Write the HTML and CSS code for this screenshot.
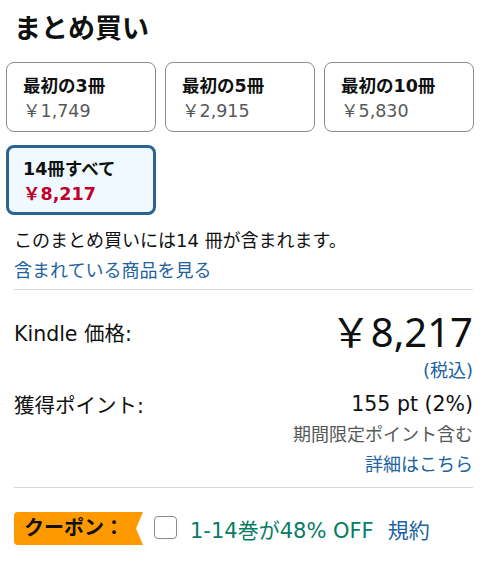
FILE: index.html
```html
<!DOCTYPE html>
<html lang="ja">
<head>
    <meta charset="UTF-8">
    <meta name="viewport" content="width=device-width, initial-scale=1.0">
    <title>まとめ買い</title>
    <link rel="stylesheet" href="styles.css">
</head>
<body>
    <div class="panel">
        <h2 class="title">まとめ買い</h2>

        <div class="swatches">
            <div class="swatch">
                <div class="swatch-name">最初の3冊</div>
                <div class="swatch-price">￥1,749</div>
            </div>
            <div class="swatch">
                <div class="swatch-name">最初の5冊</div>
                <div class="swatch-price">￥2,915</div>
            </div>
            <div class="swatch">
                <div class="swatch-name">最初の10冊</div>
                <div class="swatch-price">￥5,830</div>
            </div>
            <div class="swatch selected">
                <div class="swatch-name">14冊すべて</div>
                <div class="swatch-price">￥8,217</div>
            </div>
        </div>

        <div class="summary">
            <div>このまとめ買いには14 冊が含まれます。</div>
            <a class="link" href="#">含まれている商品を見る</a>
        </div>

        <hr class="divider">

        <div class="price-row">
            <span class="label">Kindle 価格:</span>
            <span class="big-price">￥8,217</span>
        </div>
        <div class="note"><a class="link" href="#">(税込)</a></div>

        <div class="points-row">
            <span class="label">獲得ポイント:</span>
            <span class="points">155 pt (2%)</span>
        </div>
        <div class="note muted">期間限定ポイント含む</div>
        <div class="note"><a class="link" href="#">詳細はこちら</a></div>

        <hr class="divider">

        <div class="coupon">
            <span class="coupon-badge">クーポン：</span>
            <span class="checkbox"></span>
            <span class="coupon-text">1-14巻が48% OFF</span>
            <a class="link coupon-terms" href="#">規約</a>
        </div>
    </div>
</body>
</html>
```

FILE: styles.css
```css
body {
    margin: 0;
    font-family: "DejaVu Sans", "Noto Sans CJK JP", sans-serif;
    color: #0f1111;
    background: #fff;
}
.panel {
    padding: 0 15px 0 14px;
}
.title {
    margin: 0;
    padding-top: 11px;
    font-size: 27px;
    line-height: 36px;
    font-weight: bold;
}
.swatches {
    display: grid;
    grid-template-columns: repeat(3, 150px);
    column-gap: 9px;
    row-gap: 13px;
    margin: 15px 0 0 -8px;
}
.swatch {
    border: 1px solid #888c8c;
    border-radius: 8px;
    padding: 11px 15px 7px 16px;
    line-height: 25px;
    font-size: 17.5px;
}
.swatch-name {
    font-weight: bold;
}
.swatch-price {
    color: #565959;
}
.swatch.selected {
    border: 3px solid #2b6494;
    padding: 9px 13px 5px 14px;
    background: #eff9ff;
}
.swatch.selected .swatch-price {
    color: #c0002a;
    font-weight: bold;
}
.summary {
    margin-top: 11px;
    font-size: 18px;
    line-height: 30px;
}
.link {
    color: #2162a1;
    text-decoration: none;
}
.summary .link {
    display: block;
}
.divider {
    border: 0;
    border-top: 1px solid #d5d9d9;
    margin: 3px 0 0;
}
.price-row {
    display: flex;
    justify-content: space-between;
    align-items: center;
    height: 44px;
    margin-top: 20px;
}
.label {
    font-size: 20.5px;
}
.big-price {
    font-family: "Noto Sans", "Noto Sans CJK JP", sans-serif;
    font-size: 40px;
    line-height: 44px;
}
.note {
    text-align: right;
    font-size: 18px;
    line-height: 30px;
}
.price-row + .note {
    margin-top: 2px;
}
.points-row {
    display: flex;
    justify-content: space-between;
    align-items: center;
    height: 30px;
    margin-top: 3px;
}
.points {
    font-size: 20.5px;
}
.muted {
    color: #565959;
    margin-top: 1px;
}
.note + .divider {
    margin-top: 7px;
}
.coupon {
    display: flex;
    align-items: center;
    margin-top: 24px;
}
.coupon-badge {
    box-sizing: border-box;
    width: 129px;
    height: 33px;
    line-height: 33px;
    padding-left: 10px;
    background: #fe9900;
    border-radius: 4px 0 0 4px;
    font-size: 20px;
    font-weight: bold;
    clip-path: polygon(0 0, 100% 0, calc(100% - 7px) 50%, 100% 100%, 0 100%);
}
.checkbox {
    box-sizing: border-box;
    width: 23px;
    height: 23px;
    margin-left: 11px;
    border: 1px solid #888c8c;
    border-radius: 4px;
    margin-top: -3px;
}
.coupon-text {
    margin-left: 13px;
    color: #067d62;
    font-size: 21px;
}
.coupon-terms {
    margin-left: 14px;
    font-size: 21px;
}
```
